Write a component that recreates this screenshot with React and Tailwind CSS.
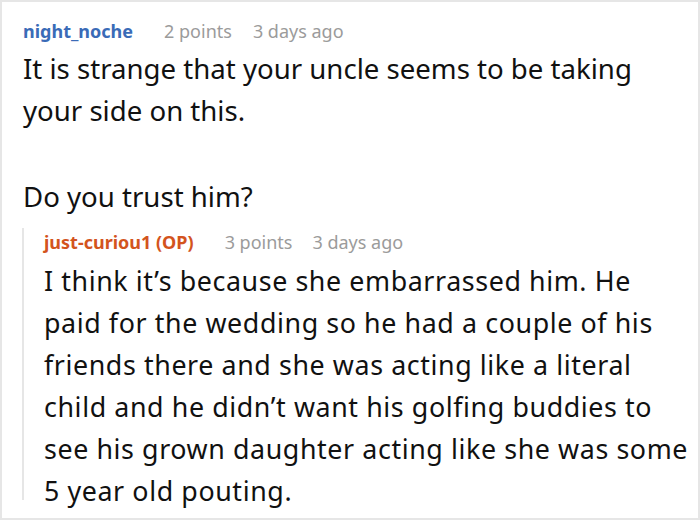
export default function App() {
  const font = { fontFamily: '"Noto Sans", "Open Sans", sans-serif' };
  const reply = [
    "I think it’s because she embarrassed him. He",
    "paid for the wedding so he had a couple of his",
    "friends there and she was acting like a literal",
    "child and he didn’t want his golfing buddies to",
    "see his grown daughter acting like she was some",
    "5 year old pouting.",
  ];
  return (
    <div className="w-[700px] h-[520px] bg-white border-2 border-[#e6e6e6] overflow-hidden" style={font}>
      <div className="pl-[21px] pt-[16px]">
        <div className="flex items-baseline text-[18px] leading-[26px]">
          <span className="font-bold text-[#3a6bb7]">night_noche</span>
          <span className="ml-[31px] text-[#9b9b9b]">2 points</span>
          <span className="ml-[21px] text-[#9b9b9b]">3 days ago</span>
        </div>
        <div className="text-[27.6px] leading-[42px] text-[#111] mt-[3px] pr-4">
          <p>It is strange that your uncle seems to be taking your side on this.</p>
          <p className="mt-[44px]">Do you trust him?</p>
        </div>
      </div>
      <div className="ml-[20px] mt-[11px] border-l-2 border-[#e6e6e6] pl-[20px]">
        <div className="flex items-baseline text-[18px] leading-[26px] pt-[1px]">
          <span className="font-bold text-[#d3541d]">just-curiou1 (OP)</span>
          <span className="ml-[31px] text-[#9b9b9b]">3 points</span>
          <span className="ml-[20px] text-[#9b9b9b]">3 days ago</span>
        </div>
        <div className="text-[26.8px] leading-[42px] tracking-[0.6px] text-[#111] mt-[5px]">
          {reply.map((l, i) => (
            <div key={i} className="whitespace-nowrap last:h-[30px]">{l}</div>
          ))}
        </div>
      </div>
    </div>
  );
}
